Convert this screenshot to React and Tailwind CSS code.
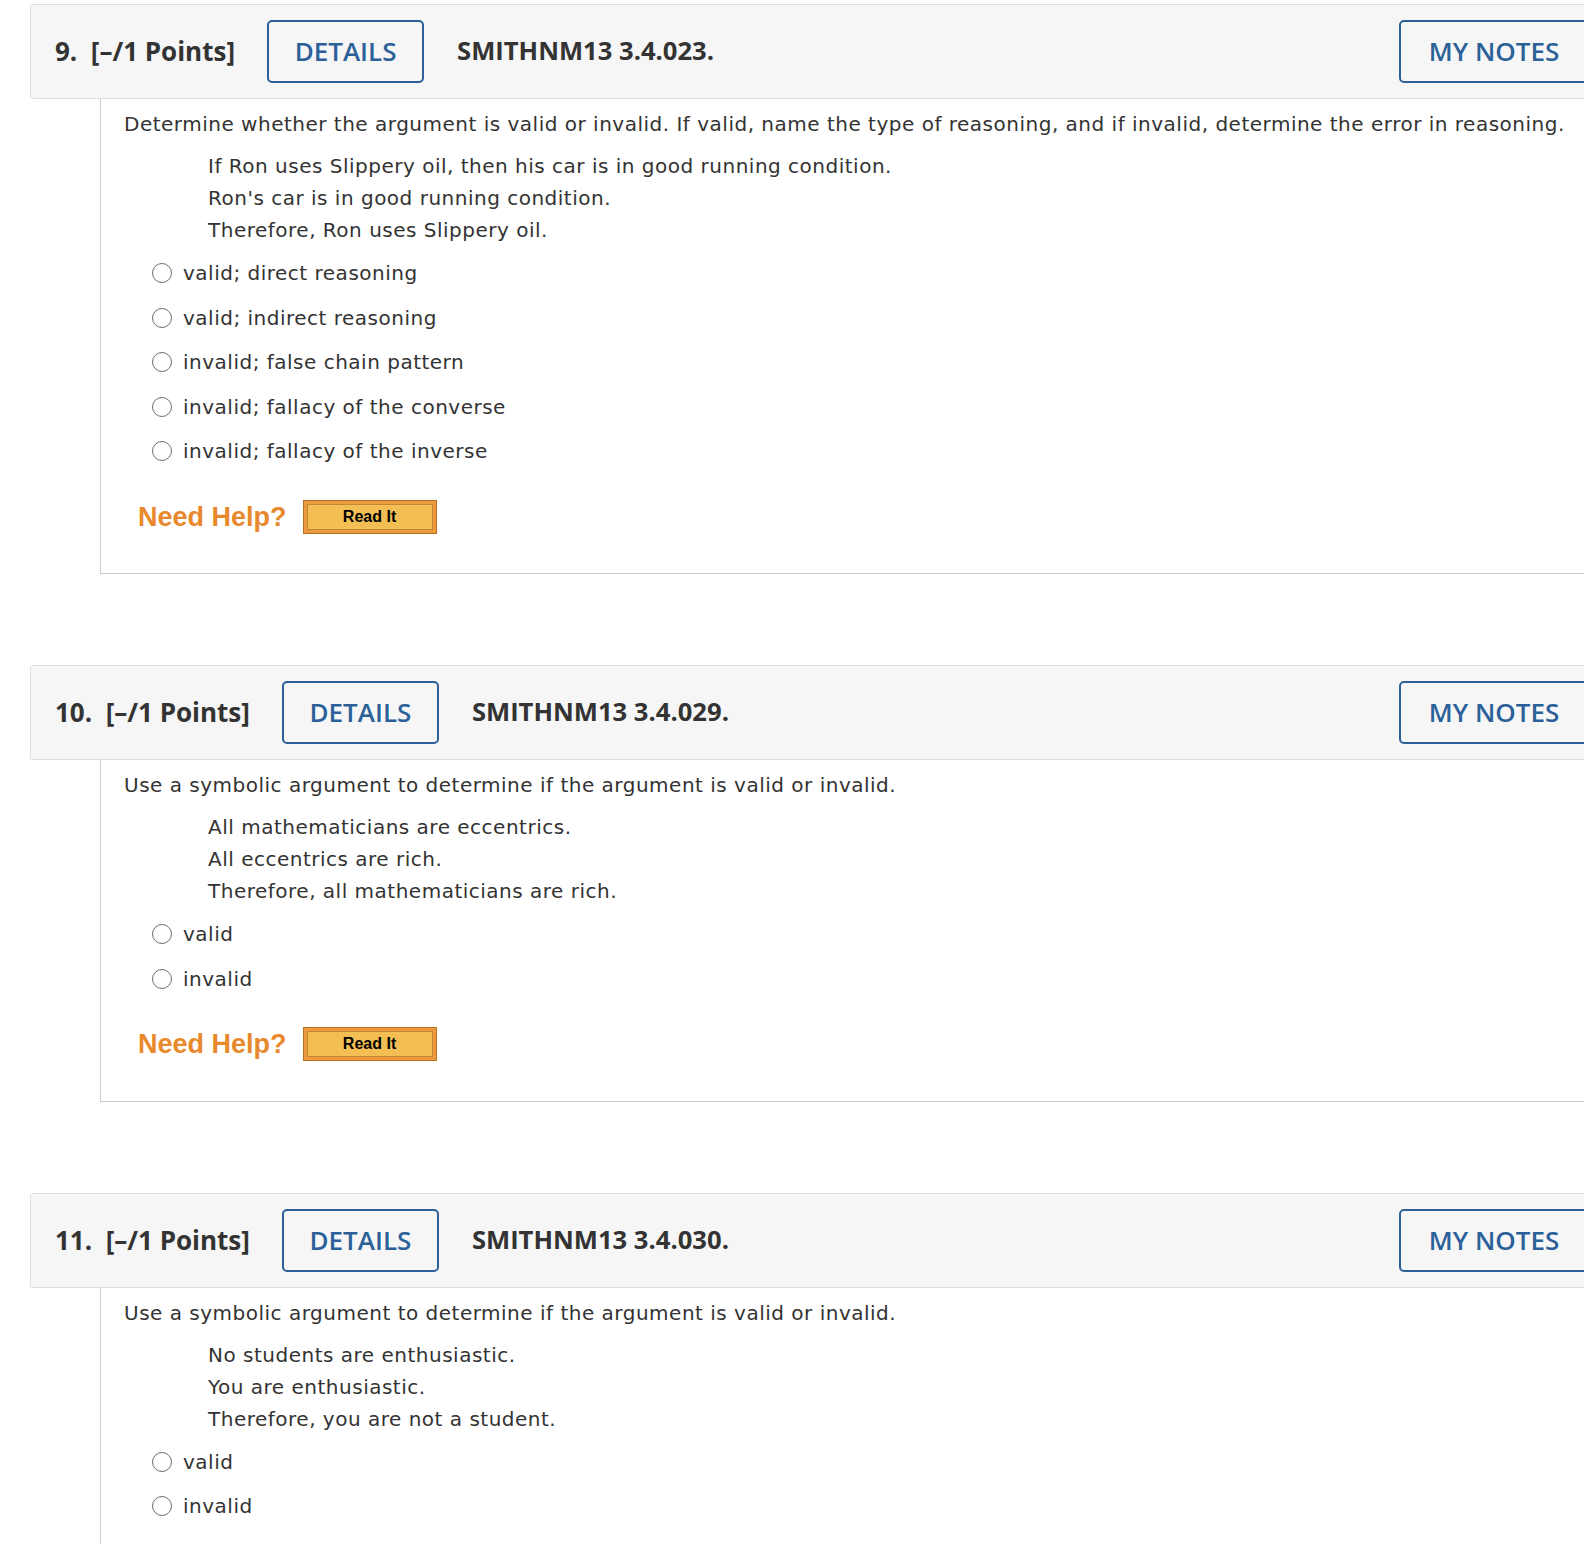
import React from 'react';

const questions = [
  {
    num: '9.',
    code: 'SMITHNM13 3.4.023.',
    prompt:
      'Determine whether the argument is valid or invalid. If valid, name the type of reasoning, and if invalid, determine the error in reasoning.',
    premises: [
      'If Ron uses Slippery oil, then his car is in good running condition.',
      "Ron's car is in good running condition.",
      'Therefore, Ron uses Slippery oil.',
    ],
    choices: [
      'valid; direct reasoning',
      'valid; indirect reasoning',
      'invalid; false chain pattern',
      'invalid; fallacy of the converse',
      'invalid; fallacy of the inverse',
    ],
  },
  {
    num: '10.',
    code: 'SMITHNM13 3.4.029.',
    prompt: 'Use a symbolic argument to determine if the argument is valid or invalid.',
    premises: [
      'All mathematicians are eccentrics.',
      'All eccentrics are rich.',
      'Therefore, all mathematicians are rich.',
    ],
    choices: ['valid', 'invalid'],
  },
  {
    num: '11.',
    code: 'SMITHNM13 3.4.030.',
    prompt: 'Use a symbolic argument to determine if the argument is valid or invalid.',
    premises: [
      'No students are enthusiastic.',
      'You are enthusiastic.',
      'Therefore, you are not a student.',
    ],
    choices: ['valid', 'invalid'],
  },
];

const OutlineButton = ({ children, className = '' }) => (
  <div
    className={`h-[63px] flex items-center justify-center border-[2.5px] border-[#2b6198] rounded-[5px] text-[#2b6198] font-semibold text-[26px] ${className}`}
  >
    {children}
  </div>
);

const Question = ({ q }) => (
  <div className="ml-[30px]">
    {/* header bar, runs past the right edge like the original page */}
    <div className="w-[1580px] h-[95px] flex items-center pl-[24px] pr-[20px] bg-[#f6f6f6] border border-[#dedede] rounded-[3px] text-[#333] font-['Open_Sans',sans-serif]">
      <span className="text-[26px] font-bold whitespace-pre">{q.num}  [–/1 Points]</span>
      <OutlineButton className="ml-[32px] w-[157px]">DETAILS</OutlineButton>
      <span className="ml-[33px] text-[25.6px] font-bold">{q.code}</span>
      <OutlineButton className="ml-auto w-[190px]">MY NOTES</OutlineButton>
    </div>

    <div className="ml-[70px] border-l border-b border-[#cccccc] pl-[23px] pt-[9px] pb-[36px] text-[20px] tracking-[0.5px] text-[#333] font-['Verdana','DejaVu_Sans',sans-serif]">
      <p className="leading-[32px]">{q.prompt}</p>
      <div className="mt-[10px] ml-[84px]">
        {q.premises.map((line) => (
          <p key={line} className="leading-[32px]">
            {line}
          </p>
        ))}
      </div>
      <div className="mt-[5px] ml-[28px]">
        {q.choices.map((c) => (
          <label key={c} className="h-[44.5px] flex items-center">
            <span className="w-[20px] h-[20px] rounded-full border-[1.5px] border-[#6e6e6e] bg-white shrink-0" />
            <span className="ml-[11px] leading-[32px]">{c}</span>
          </label>
        ))}
      </div>
      <div className="mt-[23px] ml-[14px] flex items-center tracking-normal">
        <span className="text-[27px] font-bold text-[#e8892d] font-['Liberation_Sans',Arial,sans-serif]">
          Need Help?
        </span>
        <div className="ml-[16px] w-[134px] h-[34px] border border-[#b86f24] bg-[#eb9a3e] p-[3px]">
          <div className="w-full h-full border border-[#c58634] bg-[#f3bf55] flex items-center justify-center text-[16px] font-bold text-black font-['Liberation_Sans',Arial,sans-serif]">
            Read It
          </div>
        </div>
      </div>
    </div>
  </div>
);

export default function App() {
  return (
    <div className="w-[1584px] h-[1544px] overflow-hidden bg-white pt-[4px]">
      <div className="flex flex-col gap-[91px]">
        {questions.map((q) => (
          <Question key={q.num} q={q} />
        ))}
      </div>
    </div>
  );
}
